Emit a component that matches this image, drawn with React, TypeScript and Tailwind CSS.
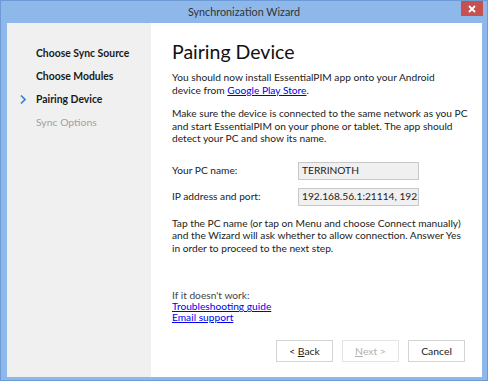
import React from "react";

export default function App() {
  const font = { fontFamily: 'Lato, "Noto Sans", sans-serif' };
  return (
    <div
      className="w-[488px] h-[381px] bg-[#8db8e9] border border-[#6c9bd6] flex flex-col overflow-hidden"
      style={font}
    >
      <div className="h-[22px] relative flex items-center justify-center shrink-0">
        <span className="text-[10.8px] text-[#333] leading-none">Synchronization Wizard</span>
        <div className="absolute right-[4px] top-0 w-[22px] h-[15px] bg-[#c75050] flex items-center justify-center">
          <svg width="8" height="8" viewBox="0 0 8 8">
            <path d="M1 1L7 7M7 1L1 7" stroke="#fff" strokeWidth="1.8" />
          </svg>
        </div>
      </div>
      <div className="ml-[6px] mr-[5px] h-[354px] flex bg-white">
        <div className="w-[144px] shrink-0 bg-[#f0f0f0] pt-[19px] flex flex-col whitespace-nowrap">
          <div className="h-[23px] pl-[29px] text-[10.4px] font-bold text-[#1a1a1a] flex items-center">Choose Sync Source</div>
          <div className="h-[23px] pl-[29px] text-[10.4px] font-bold text-[#1a1a1a] flex items-center">Choose Modules</div>
          <div className="h-[23px] pl-[13px] text-[10.4px] font-bold text-[#1a1a1a] flex items-center">
            <svg width="6" height="9" viewBox="0 0 6 9" className="mr-[10px]">
              <path d="M1 0.5L5 4.5L1 8.5" stroke="#3b7fd4" strokeWidth="1.6" fill="none" />
            </svg>
            Pairing Device
          </div>
          <div className="h-[23px] pl-[29px] text-[10.4px] text-[#a0a0a0] flex items-center">Sync Options</div>
        </div>
        <div className="flex-1 min-w-0 flex flex-col pl-[21px] pr-[17px] text-[10.2px] text-[#222] leading-[12.5px] whitespace-nowrap">
          <div className="text-[19.5px] leading-[28px] text-[#111] mt-[15px] mb-[5px]">Pairing Device</div>
          <p>
            You should now install EssentialPIM app onto your Android<br />
            device from <span className="text-[#0000ee] underline">Google Play Store</span>.
          </p>
          <p className="mt-[11px]">
            Make sure the device is connected to the same network as you PC<br />
            and start EssentialPIM on your phone or tablet. The app should<br />
            detect your PC and show its name.
          </p>
          <div className="mt-[17px] flex items-center">
            <span className="w-[126px] shrink-0">Your PC name:</span>
            <div className="w-[121px] h-[18px] bg-[#f0f0f0] border border-[#c8c8c8] px-[3px] flex items-center overflow-hidden text-[#222]">TERRINOTH</div>
          </div>
          <div className="mt-[8px] flex items-center">
            <span className="w-[126px] shrink-0">IP address and port:</span>
            <div className="w-[121px] h-[18px] bg-[#f0f0f0] border border-[#c8c8c8] px-[3px] flex items-center overflow-hidden text-[#222]">192.168.56.1:21114, 192.168.1.5:21114</div>
          </div>
          <p className="mt-[11px]">
            Tap the PC name (or tap on Menu and choose Connect manually)<br />
            and the Wizard will ask whether to allow connection. Answer Yes<br />
            in order to proceed to the next step.
          </p>
          <div className="mt-[36px] leading-[11px]">
            <div className="text-[#444]">If it doesn't work:</div>
            <div><span className="text-[#0000ee] underline">Troubleshooting guide</span></div>
            <div><span className="text-[#0000ee] underline">Email support</span></div>
          </div>
          <div className="mt-auto mb-[15px] flex justify-end gap-[9px]">
            <button className="w-[57px] h-[22px] bg-white border border-[#d4d4d4] text-[10.4px] text-[#222]">&lt; <span className="underline">B</span>ack</button>
            <button className="w-[57px] h-[22px] bg-white border border-[#e4e4e4] text-[10.4px] text-[#b0b0b0]"><span className="underline">N</span>ext &gt;</button>
            <button className="w-[57px] h-[22px] bg-white border border-[#d4d4d4] text-[10.4px] text-[#222]">Cancel</button>
          </div>
        </div>
      </div>
    </div>
  );
}
